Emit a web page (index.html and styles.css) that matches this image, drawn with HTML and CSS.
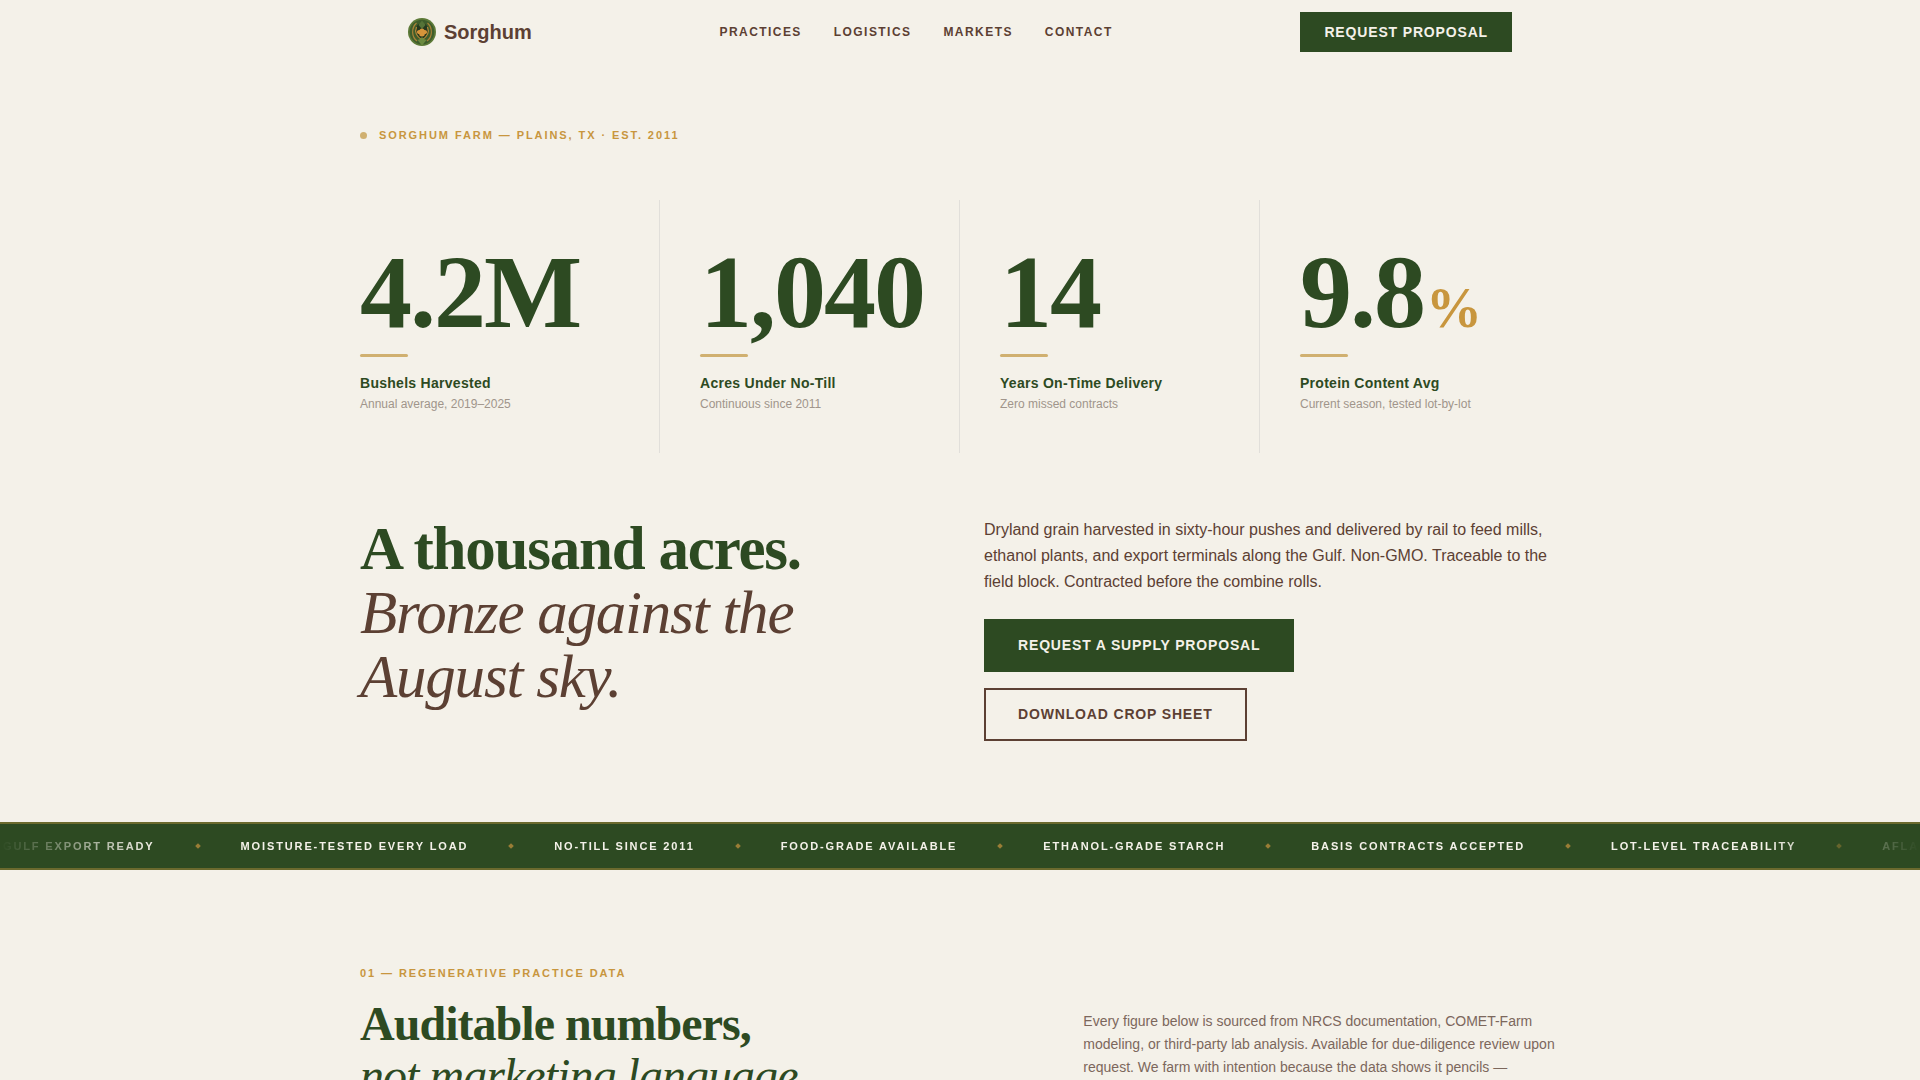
FILE: index.html
```html
<!DOCTYPE html>
<html lang="en">
<head>
<meta charset="utf-8">
<meta name="viewport" content="width=device-width, initial-scale=1">
<title>Sorghum</title>
<link rel="stylesheet" href="styles.css">
</head>
<body>
<header class="site-header">
  <a class="brand" href="#">
    <svg class="brand-mark" viewBox="0 0 28 28" aria-hidden="true">
      <circle cx="14" cy="14" r="14" fill="#5d7a38"/>
      <circle cx="14" cy="14" r="12.300" fill="#3f5d2b"/>
      <path d="M8.500 5C3 10 3.500 19 9 23M19.500 5c5.500 5 5 14-.5 18" fill="none" stroke="#a98238" stroke-width="1.200"/>
      <path d="M10.500 6C5.500 11 7 18 14 22.500 21 18 22.500 11 17.500 6L14 9z" fill="#26381f"/>
      <path d="M8.500 9C6.500 14 8.500 18.500 14 22M19.500 9c2 5 0 9.500-5.500 13" fill="none" stroke="#b58a38" stroke-width="1.200"/>
      <path d="M14 2.500l3.500 4.500-3.500 4-3.500-4z" fill="#557338"/>
      <path d="M14 10.500c1.400 0 2 .8 2.400 1.400 1.900-.1 3 1.200 2.600 2.600-.3 1.200-1.400 1.700-2.300 1.700.1 1.300-1.100 2.300-2.700 2.300s-2.800-1-2.700-2.300c-.9 0-2-.5-2.300-1.700-.4-1.400.7-2.700 2.600-2.600.4-.6 1-1.400 2.400-1.400z" fill="#d5943a"/>
      <path d="M14 27.500l-4.500-5.500c2-.3 3.500-1.500 4.500-3 1 1.500 2.500 2.700 4.500 3z" fill="#6b8a40"/>
    </svg>
    <span class="brand-name">Sorghum</span>
  </a>
  <nav class="site-nav" aria-label="Main">
    <a href="#practices">Practices</a>
    <a href="#logistics">Logistics</a>
    <a href="#markets">Markets</a>
    <a href="#contact">Contact</a>
  </nav>
  <a class="button button-small" href="#contact">Request Proposal</a>
</header>

<main>
  <section class="hero">
    <p class="eyebrow"><span class="eyebrow-dot"></span>Sorghum Farm — Plains, TX · Est. 2011</p>
    <div class="stats">
      <div class="stat">
        <div class="stat-number">4.2M</div>
        <div class="stat-label">Bushels Harvested</div>
        <div class="stat-note">Annual average, 2019–2025</div>
      </div>
      <div class="stat">
        <div class="stat-number">1,040</div>
        <div class="stat-label">Acres Under No-Till</div>
        <div class="stat-note">Continuous since 2011</div>
      </div>
      <div class="stat">
        <div class="stat-number">14</div>
        <div class="stat-label">Years On-Time Delivery</div>
        <div class="stat-note">Zero missed contracts</div>
      </div>
      <div class="stat">
        <div class="stat-number">9.8<span class="stat-unit">%</span></div>
        <div class="stat-label">Protein Content Avg</div>
        <div class="stat-note">Current season, tested lot-by-lot</div>
      </div>
    </div>
    <div class="intro">
      <h1 class="intro-title">A thousand acres. <em>Bronze against the August sky.</em></h1>
      <div class="intro-body">
        <p class="intro-text">Dryland grain harvested in sixty-hour pushes and delivered by rail to feed mills, ethanol plants, and export terminals along the Gulf. Non-GMO. Traceable to the field block. Contracted before the combine rolls.</p>
        <a class="button" href="#contact">Request a Supply Proposal</a>
        <a class="button button-outline" href="#crop-sheet">Download Crop Sheet</a>
      </div>
    </div>
  </section>

  <div class="ticker">
    <ul class="ticker-track">
      <li>Gulf Export Ready</li>
      <li>Moisture-Tested Every Load</li>
      <li>No-Till Since 2011</li>
      <li>Food-Grade Available</li>
      <li>Ethanol-Grade Starch</li>
      <li>Basis Contracts Accepted</li>
      <li>Lot-Level Traceability</li>
      <li>Aflatoxin Tested</li>
    </ul>
  </div>

  <section class="practices" id="practices">
    <div>
      <p class="section-label">01 — Regenerative Practice Data</p>
      <h2 class="section-title">Auditable numbers, <em>not marketing language.</em></h2>
    </div>
    <p class="section-text">Every figure below is sourced from NRCS documentation, COMET-Farm modeling, or third-party lab analysis. Available for due-diligence review upon request. We farm with intention because the data shows it pencils —</p>
  </section>
</main>
</body>
</html>
```
FILE: styles.css
```css
:root {
  --cream: #f4f1e9;
  --green: #2d4a22;
  --brown: #5c4033;
  --gold: #c8963e;
  --wheat: #d0b070;
  --sans: "Liberation Sans", Arial, sans-serif;
  --serif: "Liberation Serif", "Times New Roman", serif;
}

* {
  box-sizing: border-box;
  margin: 0;
  padding: 0;
}

body {
  background: var(--cream);
  color: var(--brown);
  font-family: var(--sans);
  font-size: 16px;
  overflow-x: hidden;
}

a {
  color: inherit;
  text-decoration: none;
}

.site-header {
  display: flex;
  align-items: center;
  justify-content: space-between;
  max-width: 1200px;
  margin: 0 auto;
  padding: 12px 48px;
}

.brand {
  display: flex;
  align-items: center;
  gap: 8px;
}

.brand-mark {
  width: 28px;
  height: 28px;
}

.brand-name {
  font-size: 20px;
  font-weight: 700;
}

.site-nav {
  display: flex;
  gap: 32px;
  font-size: 12px;
  font-weight: 700;
  letter-spacing: 0.12em;
  text-transform: uppercase;
}

.button {
  display: inline-block;
  padding: 16px 32px;
  border: 2px solid var(--green);
  background: var(--green);
  color: var(--cream);
  font-size: 14px;
  font-weight: 700;
  line-height: 17px;
  letter-spacing: 0.06em;
  text-transform: uppercase;
}

.button-small {
  padding: 12px 24px;
  border: 0;
  line-height: 16px;
}

.button-outline {
  border-color: var(--brown);
  background: transparent;
  color: var(--brown);
}

.hero {
  max-width: 1200px;
  margin: 0 auto;
  padding: 64px 0 81px;
}

.eyebrow {
  display: flex;
  align-items: center;
  gap: 12px;
  margin-bottom: 58px;
  color: var(--gold);
  font-size: 11px;
  font-weight: 700;
  line-height: 14px;
  letter-spacing: 0.175em;
  text-transform: uppercase;
}

.eyebrow-dot {
  width: 7px;
  height: 7px;
  border-radius: 50%;
  background: var(--wheat);
}

.stats {
  display: grid;
  grid-template-columns: repeat(4, 1fr);
}

.stat {
  padding: 40px 0 40px 40px;
  border-right: 1px solid #e1dfda;
}

.stat:first-child {
  padding-left: 0;
}

.stat:last-child {
  border-right: 0;
}

.stat-number {
  color: var(--green);
  font-family: var(--serif);
  font-size: 104px;
  font-weight: 700;
  line-height: 104px;
  letter-spacing: -2px;
}

.stat-number::after {
  content: "";
  display: block;
  width: 48px;
  height: 3px;
  margin: 10px 0 16px;
  border-radius: 2px;
  background: var(--wheat);
}

.stat-unit {
  margin-left: 2px;
  color: var(--gold);
  font-size: 56px;
  line-height: 1;
}

.stat-label {
  color: var(--green);
  font-size: 14px;
  font-weight: 700;
  line-height: 20px;
  letter-spacing: 0.02em;
}

.stat-note {
  margin-top: 2px;
  color: #a0958b;
  font-size: 12px;
  line-height: 18px;
}

.intro {
  display: grid;
  grid-template-columns: 1fr 1fr;
  gap: 48px;
  margin-top: 64px;
}

.intro-title {
  color: var(--green);
  font-family: var(--serif);
  font-size: 61px;
  font-weight: 700;
  line-height: 64px;
  letter-spacing: -0.02em;
}

.intro-title em {
  display: block;
  color: var(--brown);
  font-weight: 400;
}

.intro-body {
  display: flex;
  flex-direction: column;
  align-items: flex-start;
  gap: 16px;
}

.intro-text {
  margin-bottom: 8px;
  line-height: 26px;
}

.ticker {
  overflow: hidden;
  padding: 14px 0;
  border-top: 2px solid #6b6a2e;
  border-bottom: 2px solid #6b6a2e;
  background: var(--green);
}

.ticker-track {
  display: flex;
  padding-left: 3px;
  list-style: none;
  color: var(--cream);
  font-size: 11px;
  font-weight: 700;
  line-height: 16px;
  letter-spacing: 0.17em;
  text-transform: uppercase;
  white-space: nowrap;
  -webkit-mask-image: linear-gradient(90deg, transparent, #000 8%, #000 92%, transparent);
  mask-image: linear-gradient(90deg, transparent, #000 8%, #000 92%, transparent);
}

.ticker-track li {
  display: flex;
  align-items: center;
  flex: none;
}

.ticker-track li::after {
  content: "";
  width: 4px;
  height: 4px;
  margin: 0 41px;
  background: #9a7d36;
  transform: rotate(45deg);
}

.practices {
  display: grid;
  grid-template-columns: 14fr 10fr;
  align-items: end;
  gap: 56px;
  max-width: 1200px;
  margin: 0 auto;
  padding: 96px 0 0;
}

.section-label {
  margin-bottom: 18px;
  color: var(--gold);
  font-size: 11px;
  font-weight: 700;
  line-height: 14px;
  letter-spacing: 0.175em;
  text-transform: uppercase;
}

.section-title {
  color: var(--green);
  font-family: var(--serif);
  font-size: 48px;
  font-weight: 700;
  line-height: 52px;
  letter-spacing: -0.02em;
}

.section-title em {
  display: block;
  font-weight: 400;
}

.section-text {
  padding-bottom: 23px;
  color: #7c675c;
  font-size: 14px;
  line-height: 23px;
}
```
